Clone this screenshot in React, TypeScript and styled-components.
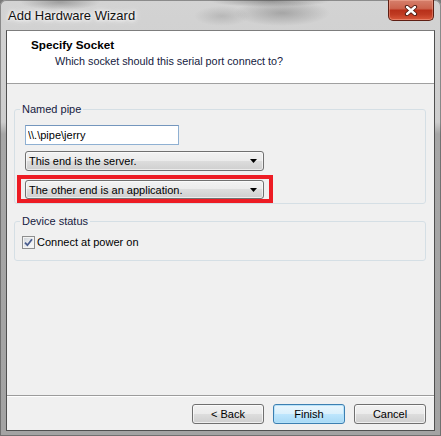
import React from "react";
import styled, { createGlobalStyle } from "styled-components";

const Global = createGlobalStyle`
  html, body { margin: 0; padding: 0; background: #7a7a7a; }
  body { font-family: "Liberation Sans", Arial, sans-serif; font-size: 11px; color: #000; }
  #root { width: 441px; height: 436px; }
`;

const Window = styled.div`
  box-sizing: border-box;
  width: 441px;
  height: 436px;
  display: flex;
  flex-direction: column;
  border-radius: 6px 6px 0 0;
  overflow: hidden;
  box-shadow: inset 0 0 0 1px rgba(50, 50, 50, 0.45);
  background:
    radial-gradient(48px 13px at 282px 13px, rgba(70, 70, 70, 0.32), transparent),
    radial-gradient(28px 10px at 222px 16px, rgba(90, 90, 90, 0.22), transparent),
    radial-gradient(40px 8px at 60px 2px, rgba(60, 60, 60, 0.35), transparent),
    radial-gradient(60px 6px at 270px 1px, rgba(60, 60, 60, 0.4), transparent),
    linear-gradient(to bottom, #d3d3d3 0px, #cdcdcd 122px, #a6a6a6 134px, #a3a3a3 100%);
`;

const TitleBar = styled.div`
  height: 30px;
  flex: none;
  display: flex;
  align-items: flex-start;
  justify-content: space-between;
  padding: 0 7px 0 8px;
`;

const TitleText = styled.div`
  font-size: 13px;
  line-height: 31px;
  color: #111;
  text-shadow: 0 0 8px #fff, 0 0 5px #fff, 0 0 3px rgba(255, 255, 255, 0.9);
`;

const CloseButton = styled.div`
  box-sizing: border-box;
  width: 46px;
  height: 21px;
  display: flex;
  align-items: center;
  justify-content: center;
  border: 1px solid #5e1e13;
  border-top: none;
  border-radius: 0 0 5px 5px;
  background: linear-gradient(
    to bottom,
    #d6806c 0%,
    #cc644e 42%,
    #b8301a 52%,
    #bf3a22 72%,
    #d9593b 100%
  );
  box-shadow: inset 0 0 0 1px rgba(255, 190, 170, 0.4);
`;

const Client = styled.div`
  flex: 1;
  display: flex;
  flex-direction: column;
  margin: 0 6px 5px 6px;
  border: 1px solid #4f4f4f;
  border-top-color: #7d7d7d;
  background: #f0f0f0;
`;

const Header = styled.div`
  flex: none;
  box-sizing: border-box;
  height: 53px;
  background: #fff;
  border-bottom: 1px solid #a0a0a0;
  padding: 7px 0 0 24px;
`;

const HeaderTitle = styled.div`
  font-weight: bold;
  font-size: 11.7px;
  line-height: 14px;
  color: #000;
`;

const HeaderSub = styled.div`
  margin: 2px 0 0 24px;
  line-height: 14px;
  font-size: 10.8px;
  color: #141a40;
`;

const Body = styled.div`
  flex: 1;
  padding: 18px 8px 0 7px;
`;

const Group = styled.fieldset<{ $gapTop?: number }>`
  margin: ${(p) => p.$gapTop ?? 0}px 0 0 0;
  padding: 0;
  min-width: 0;
  border: 1px solid #d5dfe5;
  border-radius: 3px;
`;

const Legend = styled.legend`
  margin-left: 5px;
  padding: 0 2px;
  font-size: 11px;
  line-height: 14px;
  color: #16203f;
`;

const GroupInner = styled.div<{ $pt: number; $pb: number }>`
  display: flex;
  flex-direction: column;
  align-items: flex-start;
  padding: ${(p) => p.$pt}px 0 ${(p) => p.$pb}px 10px;
`;

const TextInput = styled.input`
  box-sizing: border-box;
  width: 154px;
  height: 20px;
  margin: 0 0 6px 0;
  padding: 0 2px;
  border: 1px solid #8fb0d2;
  border-top-color: #7496bd;
  background: #fff;
  font-family: "Liberation Sans", Arial, sans-serif;
  font-size: 11px;
  color: #000;
  outline: none;
`;

const Combo = styled.div<{ $h?: number }>`
  box-sizing: border-box;
  width: 239px;
  height: ${(p) => p.$h ?? 20}px;
  display: flex;
  align-items: center;
  justify-content: space-between;
  padding: 0 6px 0 3px;
  border: 1px solid #707070;
  border-radius: 3px;
  background: linear-gradient(to bottom, #f2f2f2 0%, #ebebeb 50%, #dddddd 50%, #cfcfcf 100%);
  box-shadow: inset 0 0 0 1px rgba(255, 255, 255, 0.6);
  line-height: 14px;
`;

const Highlight = styled.div`
  margin: 4px 0 0 -8px;
  padding: 1px 5px 0 4px;
  border: 4px solid #ed1c24;
`;

const CheckRow = styled.label`
  display: flex;
  align-items: center;
  gap: 2px;
  margin-left: -3px;
  line-height: 13px;
`;

const CheckBox = styled.span`
  box-sizing: border-box;
  width: 13px;
  height: 13px;
  display: flex;
  align-items: center;
  justify-content: center;
  border: 1px solid #8e8f8f;
  background: linear-gradient(135deg, #cdd2d8 0%, #eef0f2 60%, #fbfbfb 100%);
  box-shadow: inset 0 0 0 1px #f4f4f4;
`;

const Footer = styled.div`
  flex: none;
  display: flex;
  justify-content: flex-end;
  gap: 9px;
  padding: 8px 8px 6px 0;
  border-top: 1px solid #9c9c9c;
  box-shadow: inset 0 1px 0 #ffffff;
`;

const Button = styled.button<{ $default?: boolean }>`
  box-sizing: border-box;
  width: 72px;
  height: 20px;
  padding: 0;
  border: 1px solid ${(p) => (p.$default ? "#3c7fb1" : "#707070")};
  border-radius: 3px;
  background: ${(p) =>
    p.$default
      ? "linear-gradient(to bottom, #eaf6fd 0%, #d9f0fc 50%, #bee6fd 50%, #a7d9f5 100%)"
      : "linear-gradient(to bottom, #f2f2f2 0%, #ebebeb 50%, #dddddd 50%, #cfcfcf 100%)"};
  box-shadow: inset 0 0 0 1px
    ${(p) => (p.$default ? "rgba(180, 225, 250, 0.9)" : "rgba(255, 255, 255, 0.65)")};
  font-family: "Liberation Sans", Arial, sans-serif;
  font-size: 11px;
  color: #000;
`;

const Arrow = () => (
  <svg width="7" height="4" viewBox="0 0 7 4">
    <path d="M0 0 H7 L3.5 4 Z" fill="#000" />
  </svg>
);

const CloseGlyph = () => (
  <svg width="14" height="11" viewBox="0 0 14 11">
    <path d="M3 2 L11 9 M11 2 L3 9" stroke="#4a170e" strokeWidth="4.2" strokeLinecap="round" />
    <path d="M3 2 L11 9 M11 2 L3 9" stroke="#ffffff" strokeWidth="2.4" strokeLinecap="round" />
  </svg>
);

const CheckGlyph = () => (
  <svg width="9" height="9" viewBox="0 0 9 9">
    <path d="M1 4.6 L3.4 7.2 L8 1.2" stroke="#4a5d8f" strokeWidth="1.8" fill="none" />
  </svg>
);

export default function App() {
  return (
    <>
      <Global />
      <Window>
        <TitleBar>
          <TitleText>Add Hardware Wizard</TitleText>
          <CloseButton>
            <CloseGlyph />
          </CloseButton>
        </TitleBar>
        <Client>
          <Header>
            <HeaderTitle>Specify Socket</HeaderTitle>
            <HeaderSub>Which socket should this serial port connect to?</HeaderSub>
          </Header>
          <Body>
            <Group>
              <Legend>Named pipe</Legend>
              <GroupInner $pt={9} $pb={0}>
                <TextInput readOnly value={"\\\\.\\pipe\\jerry"} />
                <Combo>
                  <span>This end is the server.</span>
                  <Arrow />
                </Combo>
                <Highlight>
                  <Combo $h={19}>
                    <span>The other end is an application.</span>
                    <Arrow />
                  </Combo>
                </Highlight>
              </GroupInner>
            </Group>
            <Group $gapTop={10}>
              <Legend>Device status</Legend>
              <GroupInner $pt={8} $pb={11}>
                <CheckRow>
                  <CheckBox>
                    <CheckGlyph />
                  </CheckBox>
                  <span>Connect at power on</span>
                </CheckRow>
              </GroupInner>
            </Group>
          </Body>
          <Footer>
            <Button>&lt; Back</Button>
            <Button $default>Finish</Button>
            <Button>Cancel</Button>
          </Footer>
        </Client>
      </Window>
    </>
  );
}
